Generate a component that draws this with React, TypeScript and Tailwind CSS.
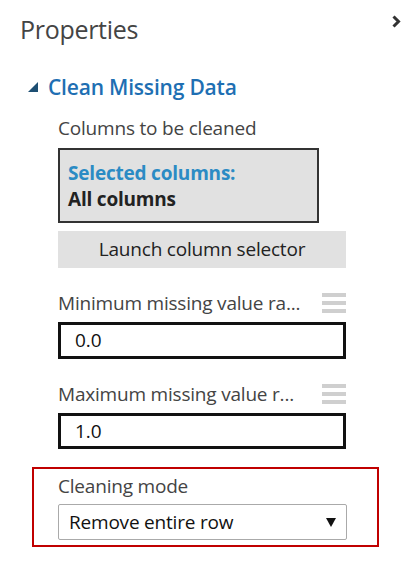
const font = { fontFamily: '"Open Sans", "Noto Sans", sans-serif' };

function Handle() {
  return (
    <div className="flex flex-col gap-[4px] w-[24px]">
      <div className="h-[4px] bg-[#cfcfcf]" />
      <div className="h-[4px] bg-[#cfcfcf]" />
      <div className="h-[4px] bg-[#cfcfcf]" />
    </div>
  );
}

export default function App() {
  return (
    <div className="w-[420px] h-[573px] bg-white text-[#333]" style={font}>
      <div className="flex items-start justify-between pl-[20px] pr-[19px] pt-[12px]">
        <h1 className="text-[25px] leading-[34px] text-[#444] tracking-[-0.3px]">Properties</h1>
        <svg width="9" height="13" viewBox="0 0 9 13" className="mt-[3px]">
          <polyline points="1.5,1.5 6.5,6.5 1.5,11.5" fill="none" stroke="#333" strokeWidth="3" />
        </svg>
      </div>

      <div className="flex items-center gap-[10px] pl-[28px] mt-[28px]">
        <svg width="10" height="10" viewBox="0 0 10 10">
          <polygon points="10,0 10,10 0,10" fill="#1d4f73" />
        </svg>
        <span className="text-[21px] leading-[26px] font-semibold text-[#1e6fb3] tracking-[-0.2px]">Clean Missing Data</span>
      </div>

      <div className="pl-[58px] pr-[74px] mt-[16px] flex flex-col">
        <p className="text-[19px] leading-[24px] text-[#444] tracking-[-0.2px]">Columns to be cleaned</p>

        <div className="mt-[8px] w-[261px] h-[75px] border-2 border-[#333] bg-[#e1e1e1] px-[8px] pt-[10px] flex flex-col">
          <span className="text-[19px] leading-[26px] font-bold text-[#2b8bc4] tracking-[-0.2px]">Selected columns:</span>
          <span className="text-[19px] leading-[26px] font-bold text-[#222] tracking-[-0.2px]">All columns</span>
        </div>

        <div className="mt-[8px] h-[37px] bg-[#e1e1e1] flex items-center justify-center text-[19px] text-[#222] tracking-[-0.2px]">
          Launch column selector
        </div>

        <div className="mt-[24px] flex items-center justify-between">
          <span className="text-[19px] leading-[22px] text-[#444] tracking-[-0.2px]">Minimum missing value ra...</span>
          <Handle />
        </div>
        <div className="mt-[8px] h-[37px] border-[3px] border-[#111] flex items-center px-[14px] text-[19px] text-[#111]">
          0.0
        </div>

        <div className="mt-[24px] flex items-center justify-between">
          <span className="text-[19px] leading-[22px] text-[#444] tracking-[-0.2px]">Maximum missing value r...</span>
          <Handle />
        </div>
        <div className="mt-[8px] h-[36px] border-[3px] border-[#111] flex items-center px-[14px] text-[19px] text-[#111]">
          1.0
        </div>
      </div>

      <div className="ml-[32px] mt-[18px] w-[347px] h-[80px] border-2 border-[#c00000] pl-[24px] pr-[30px] pt-[6px] flex flex-col">
        <p className="text-[19px] leading-[22px] text-[#444] tracking-[-0.2px]">Cleaning mode</p>
        <div className="mt-[7px] h-[36px] border border-[#aaa] rounded-[2px] flex items-center justify-between pl-[10px] pr-[10px] text-[19px] text-[#111] tracking-[-0.2px]">
          <span>Remove entire row</span>
          <svg width="10" height="9" viewBox="0 0 10 9">
            <polygon points="0,0 10,0 5,9" fill="#111" />
          </svg>
        </div>
      </div>
    </div>
  );
}
